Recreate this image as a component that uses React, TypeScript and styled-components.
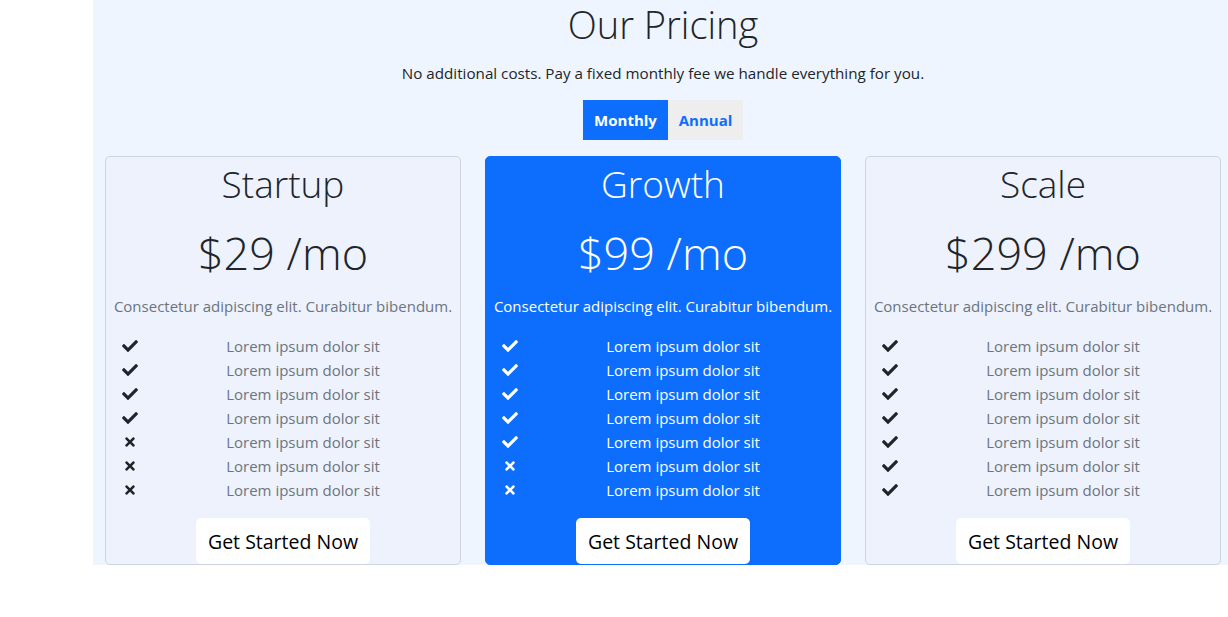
import React from "react";
import styled, { createGlobalStyle } from "styled-components";
import { FaCheck, FaTimes } from "react-icons/fa";

const GlobalStyle = createGlobalStyle`
  html, body { margin: 0; padding: 0; background: #ffffff; }
  body {
    font-family: "Open Sans", "Noto Sans", sans-serif;
    color: #212529;
    font-size: 16px;
    line-height: 1.5;
  }
  * { box-sizing: border-box; }
`;

const Page = styled.div`
  display: flex;
  padding-left: 93px;
`;

const Section = styled.section`
  flex: 1;
  background: #eff5fe;
  padding: 0 7px 0 12px;
  text-align: center;
`;

const Title = styled.h1`
  margin: 0;
  font-size: 38px;
  font-weight: 300;
  line-height: 48px;
`;

const Subtitle = styled.p`
  margin: 13px 0 0;
  font-size: 15.2px;
  line-height: 24px;
`;

const Toggle = styled.div`
  display: flex;
  justify-content: center;
  margin-top: 15px;
`;

const ToggleButton = styled.button<{ $active?: boolean; $w: number }>`
  height: 40px;
  width: ${(p) => p.$w}px;
  border: none;
  font-family: inherit;
  font-size: 15px;
  font-weight: 700;
  background: ${(p) => (p.$active ? "#0d6efd" : "#eeeeee")};
  color: ${(p) => (p.$active ? "#ffffff" : "#0d6efd")};
  padding: 0;
`;

const Cards = styled.div`
  display: grid;
  grid-template-columns: repeat(3, 356px);
  gap: 24px;
  margin-top: 16px;
`;

const Card = styled.div<{ $featured?: boolean }>`
  background: ${(p) => (p.$featured ? "#0d6efd" : "#edf2fd")};
  border: 1px solid ${(p) => (p.$featured ? "#0d6efd" : "#cdd3e0")};
  border-radius: 5px;
  color: ${(p) => (p.$featured ? "#ffffff" : "#212529")};
  padding-top: 3px;
  display: flex;
  flex-direction: column;
  align-items: stretch;
`;

const PlanName = styled.h2`
  margin: 0;
  font-size: 37px;
  font-weight: 300;
  line-height: 48px;
`;

const Price = styled.div`
  margin-top: 16px;
  font-size: 45px;
  font-weight: 300;
  line-height: 58px;
`;

const Description = styled.p<{ $featured?: boolean }>`
  margin: 12px 0 0;
  padding: 0 6px;
  font-size: 15px;
  line-height: 24px;
  color: ${(p) => (p.$featured ? "#ffffff" : "#6c757d")};
  white-space: nowrap;
`;

const FeatureList = styled.ul`
  list-style: none;
  margin: 16px 0 0;
  padding: 0 8px 0 16px;
`;

const Feature = styled.li<{ $featured?: boolean }>`
  display: grid;
  grid-template-columns: 32px 1fr;
  align-items: center;
  height: 24px;
  font-size: 15px;
  color: ${(p) => (p.$featured ? "#ffffff" : "#6c757d")};
`;

const IconCell = styled.span<{ $featured?: boolean }>`
  display: flex;
  justify-content: center;
  width: 16px;
  color: ${(p) => (p.$featured ? "#ffffff" : "#212529")};
`;

const CTA = styled.button`
  align-self: center;
  margin-top: 16px;
  background: #ffffff;
  border: none;
  border-radius: 5px;
  height: 46px;
  padding: 0 12px;
  font-family: inherit;
  font-size: 19.5px;
  font-weight: 500;
  color: #000000;
`;

type Plan = { name: string; price: string; checks: number; featured?: boolean };

const plans: Plan[] = [
  { name: "Startup", price: "$29 /mo", checks: 4 },
  { name: "Growth", price: "$99 /mo", checks: 5, featured: true },
  { name: "Scale", price: "$299 /mo", checks: 7 },
];

export default function App() {
  return (
    <>
      <GlobalStyle />
      <Page>
        <Section>
          <Title>Our Pricing</Title>
          <Subtitle>No additional costs. Pay a fixed monthly fee we handle everything for you.</Subtitle>
          <Toggle>
            <ToggleButton $active $w={85}>Monthly</ToggleButton>
            <ToggleButton $w={75}>Annual</ToggleButton>
          </Toggle>
          <Cards>
            {plans.map((p) => (
              <Card key={p.name} $featured={p.featured}>
                <PlanName>{p.name}</PlanName>
                <Price>{p.price}</Price>
                <Description $featured={p.featured}>
                  Consectetur adipiscing elit. Curabitur bibendum.
                </Description>
                <FeatureList>
                  {Array.from({ length: 7 }).map((_, i) => (
                    <Feature key={i} $featured={p.featured}>
                      <IconCell $featured={p.featured}>
                        {i < p.checks ? <FaCheck size={16} /> : <FaTimes size={14} />}
                      </IconCell>
                      <span>Lorem ipsum dolor sit</span>
                    </Feature>
                  ))}
                </FeatureList>
                <CTA>Get Started Now</CTA>
              </Card>
            ))}
          </Cards>
        </Section>
      </Page>
    </>
  );
}
